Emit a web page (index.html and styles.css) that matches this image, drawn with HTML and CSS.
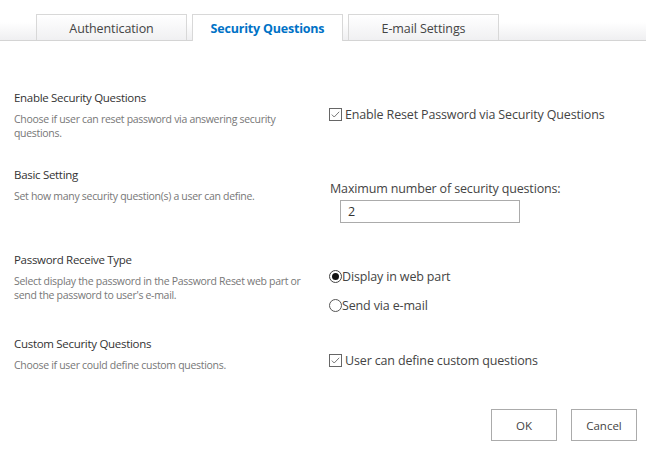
FILE: index.html
```html
<!DOCTYPE html>
<html>
<head>
<meta charset="utf-8">
<link rel="stylesheet" href="styles.css">
</head>
<body>
<div class="tabbar">
  <div class="tab">Authentication</div>
  <div class="tab active">Security Questions</div>
  <div class="tab">E-mail Settings</div>
</div>
<div class="content">
  <div class="section s1">
    <div class="info">
      <div class="title">Enable Security Questions</div>
      <div class="desc">Choose if user can reset password via answering security questions.</div>
    </div>
    <div class="control">
      <label class="check-row">
        <svg class="cb" width="13" height="13" viewBox="0 0 13 13"><rect x="0.5" y="0.5" width="12" height="12" fill="#fff" stroke="#666"/><path d="M2.8 6.6 L5.2 9 L10.2 3.8" fill="none" stroke="#777" stroke-width="1"/></svg>
        <span>Enable Reset Password via Security Questions</span>
      </label>
    </div>
  </div>
  <div class="section s2">
    <div class="info">
      <div class="title">Basic Setting</div>
      <div class="desc">Set how many security question(s) a user can define.</div>
    </div>
    <div class="control">
      <div class="label">Maximum number of security questions:</div>
      <div class="input">2</div>
    </div>
  </div>
  <div class="section s3">
    <div class="info">
      <div class="title">Password Receive Type</div>
      <div class="desc">Select display the password in the Password Reset web part or send the password to user's e-mail.</div>
    </div>
    <div class="control">
      <label class="radio-row">
        <svg class="rb" width="13" height="13" viewBox="0 0 13 13"><circle cx="6.5" cy="6.5" r="6" fill="#fff" stroke="#444"/><circle cx="6.5" cy="6.5" r="3.5" fill="#111"/></svg>
        <span>Display in web part</span>
      </label>
      <label class="radio-row">
        <svg class="rb" width="13" height="13" viewBox="0 0 13 13"><circle cx="6.5" cy="6.5" r="6" fill="#fff" stroke="#555"/></svg>
        <span>Send via e-mail</span>
      </label>
    </div>
  </div>
  <div class="section s4">
    <div class="info">
      <div class="title">Custom Security Questions</div>
      <div class="desc">Choose if user could define custom questions.</div>
    </div>
    <div class="control">
      <label class="check-row">
        <svg class="cb" width="13" height="13" viewBox="0 0 13 13"><rect x="0.5" y="0.5" width="12" height="12" fill="#fff" stroke="#666"/><path d="M2.8 6.6 L5.2 9 L10.2 3.8" fill="none" stroke="#777" stroke-width="1"/></svg>
        <span>User can define custom questions</span>
      </label>
    </div>
  </div>
  <div class="buttons">
    <button class="btn">OK</button>
    <button class="btn">Cancel</button>
  </div>
</div>
</body>
</html>
```
FILE: styles.css
```css
html, body {
  margin: 0;
  padding: 0;
  background: #fff;
}
body {
  font-family: "Open Sans", "Noto Sans", sans-serif;
  color: #444;
  width: 646px;
  height: 453px;
  overflow: hidden;
}
.tabbar {
  display: flex;
  gap: 5px;
  padding: 14px 0 0 36px;
  height: 26px;
  border-bottom: 1px solid #d4d4d4;
  background: linear-gradient(to bottom, #ffffff 0px, #ffffff 22px, #efeff1 40px);
}
.tab {
  width: 151px;
  height: 26px;
  box-sizing: border-box;
  border: 1px solid #d8d8d8;
  border-bottom: none;
  background: linear-gradient(to bottom, #ffffff 0%, #f0f0f2 100%);
  font-size: 12.5px;
  line-height: 27px;
  text-align: center;
  color: #444;
  letter-spacing: -0.1px;
}
.tab.active {
  height: 27px;
  background: #fff;
  color: #0072c6;
  font-weight: 700;
  font-size: 12.5px;
  letter-spacing: -0.2px;
}
.content {
  padding: 49px 0 0 14px;
}
.section {
  display: grid;
  grid-template-columns: 300px 1fr;
  column-gap: 16px;
}
.title {
  font-size: 11.5px;
  line-height: 16px;
  color: #333;
  letter-spacing: -0.3px;
}
.desc {
  margin-top: 6px;
  font-size: 10.5px;
  line-height: 14px;
  color: #777;
  letter-spacing: -0.3px;
}
.control {
  padding-top: 14px;
  font-size: 12.5px;
  color: #444;
  letter-spacing: -0.15px;
}
.check-row, .radio-row {
  display: flex;
  align-items: center;
  height: 20px;
}
.cb {
  margin-left: -1px;
  margin-right: 3px;
  flex: none;
}
.rb {
  margin-left: -1px;
  flex: none;
}
.radio-row + .radio-row {
  margin-top: 9px;
}
.s1 { height: 77px; }
.s2 { height: 85px; }
.s2 .control { padding-top: 13px; }
.s3 { height: 84px; }
.s4 { height: 73px; }
.label {
  line-height: 18px;
}
.input {
  margin: 2px 0 0 10px;
  width: 180px;
  height: 23px;
  box-sizing: border-box;
  border: 1px solid #ababab;
  padding-left: 7px;
  line-height: 21px;
  font-size: 12.5px;
  color: #333;
}
.buttons {
  display: flex;
  justify-content: flex-end;
  gap: 14px;
  padding-right: 9px;
}
.btn {
  width: 66px;
  height: 32px;
  border: 1px solid #ababab;
  background: #fff;
  font-family: "Open Sans", "Noto Sans", sans-serif;
  font-size: 11.5px;
  color: #444;
  padding: 0;
}
```
